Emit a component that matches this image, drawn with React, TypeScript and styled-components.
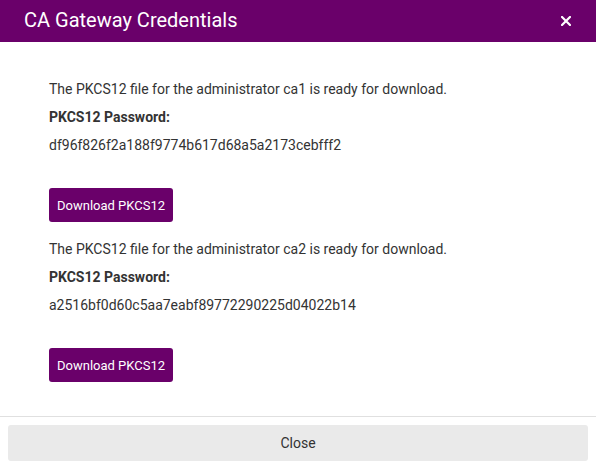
import React from "react";
import styled, { createGlobalStyle } from "styled-components";

const Global = createGlobalStyle`
  html, body { margin: 0; padding: 0; background: #fff; }
  body { font-family: Roboto, "Liberation Sans", Arial, sans-serif; }
  * { box-sizing: border-box; }
`;

const Dialog = styled.div`
  width: 596px;
  height: 464px;
  display: flex;
  flex-direction: column;
  background: #fff;
  overflow: hidden;
`;

const Header = styled.div`
  height: 42px;
  background: #6a006a;
  display: flex;
  align-items: center;
  justify-content: space-between;
  padding: 0 24px 0 24px;
  flex-shrink: 0;
`;

const Title = styled.h2`
  margin: 0 0 2px 0;
  font-size: 20px;
  font-weight: 400;
  color: #fff;
  line-height: 24px;
`;

const CloseX = styled.button`
  border: none;
  background: transparent;
  padding: 0;
  width: 12px;
  height: 12px;
  display: flex;
  align-items: center;
  justify-content: center;
  cursor: pointer;
  margin-top: -1px;
`;

const Body = styled.div`
  flex: 1;
  padding: 37px 49px 0 49px;
  display: flex;
  flex-direction: column;
  gap: 17px;
`;

const Block = styled.section`
  display: flex;
  flex-direction: column;
  align-items: flex-start;
`;

const Line = styled.p<{ $bold?: boolean }>`
  margin: 0 0 8px 0;
  font-size: 14px;
  line-height: 20px;
  color: #333;
  font-weight: ${(p) => (p.$bold ? 700 : 400)};
`;

const Hash = styled(Line)`
  margin-bottom: 33px;
`;

const PrimaryButton = styled.button`
  height: 34px;
  padding: 0 8px;
  background: #6a006a;
  color: #fff;
  border: none;
  border-radius: 3px;
  font-family: Roboto, "Liberation Sans", Arial, sans-serif;
  font-size: 13px;
  cursor: pointer;
`;

const Footer = styled.div`
  border-top: 1px solid #e0e0e0;
  padding: 8px 8px 0 8px;
  height: 48px;
  flex-shrink: 0;
`;

const CloseButton = styled.button`
  width: 100%;
  height: 36px;
  background: #eaeaea;
  border: none;
  border-radius: 3px;
  color: #333;
  font-family: Roboto, "Liberation Sans", Arial, sans-serif;
  font-size: 14px;
  cursor: pointer;
`;

const items = [
  { name: "ca1", pw: "df96f826f2a188f9774b617d68a5a2173cebfff2" },
  { name: "ca2", pw: "a2516bf0d60c5aa7eabf89772290225d04022b14" },
];

export default function App() {
  return (
    <Dialog>
      <Global />
      <Header>
        <Title>CA Gateway Credentials</Title>
        <CloseX aria-label="Close">
          <svg width="10" height="10" viewBox="0 0 10 10">
            <path d="M1 1 L9 9 M9 1 L1 9" stroke="#fff" strokeWidth="2.2" strokeLinecap="square" />
          </svg>
        </CloseX>
      </Header>
      <Body>
        {items.map((it) => (
          <Block key={it.name}>
            <Line>The PKCS12 file for the administrator {it.name} is ready for download.</Line>
            <Line $bold>PKCS12 Password:</Line>
            <Hash>{it.pw}</Hash>
            <PrimaryButton>Download PKCS12</PrimaryButton>
          </Block>
        ))}
      </Body>
      <Footer>
        <CloseButton>Close</CloseButton>
      </Footer>
    </Dialog>
  );
}
